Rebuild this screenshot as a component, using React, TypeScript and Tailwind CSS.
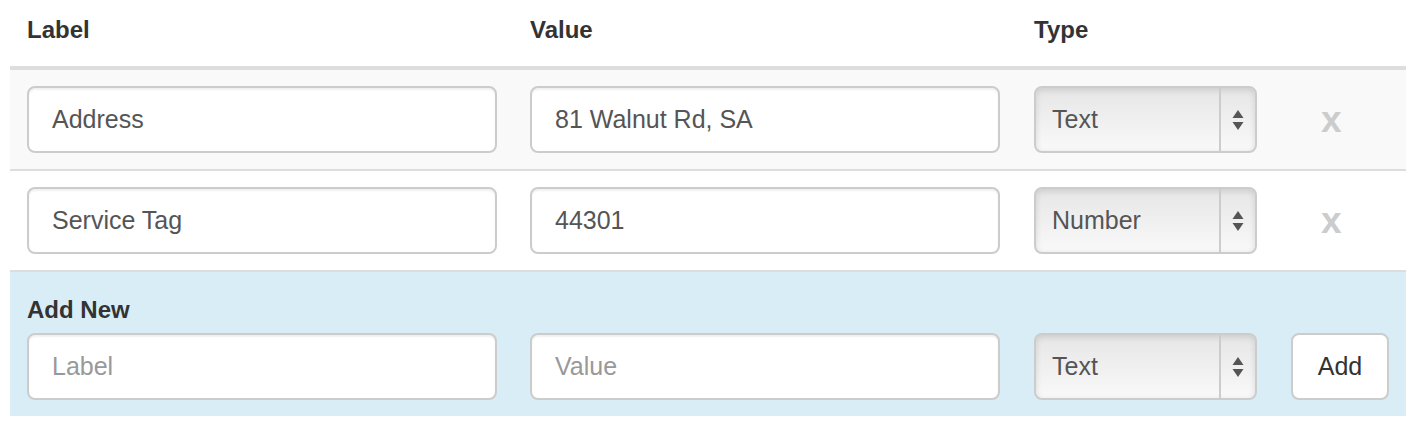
import React from 'react';

const font = { fontFamily: '"Liberation Sans", Arial, sans-serif' };

const rows = [
  { label: 'Address', value: '81 Walnut Rd, SA', type: 'Text' },
  { label: 'Service Tag', value: '44301', type: 'Number' },
];

const gridCls = 'grid grid-cols-[503px_504px_257px_98px] items-center';

const inputCls =
  'h-[67px] w-[470px] rounded-[8px] border-2 border-[#cccccc] bg-white px-[23px] text-[25px] text-[#555555] shadow-[inset_0_2px_2px_rgba(0,0,0,0.06)] outline-none placeholder:text-[#999999]';

const SelectBox: React.FC<{ value: string }> = ({ value }) => (
  <div className="flex h-[67px] w-[223px] overflow-hidden rounded-[8px] border-2 border-[#cccccc] bg-gradient-to-b from-[#e6e6e6] to-[#f9f9f9] shadow-[inset_0_2px_6px_rgba(0,0,0,0.12)]">
    <div className="flex flex-1 items-center pl-[16px] text-[25px] text-[#555555]">{value}</div>
    <div className="flex w-[36px] items-center justify-center border-l-2 border-[#cccccc]">
      <svg width="12" height="22" viewBox="0 0 12 22">
        <path d="M6 1 L11.5 9 L0.5 9 Z" fill="#555555" />
        <path d="M0.5 13 L11.5 13 L6 21 Z" fill="#555555" />
      </svg>
    </div>
  </div>
);

const App: React.FC = () => {
  return (
    <div className="min-h-[424px] bg-white pl-[10px] pr-[10px]" style={font}>
      <div className="w-[1396px]">
        {/* header */}
        <div className={`${gridCls} h-[66px] pb-[6px] pl-[17px] text-[24px] font-bold text-[#333333]`}>
          <div>Label</div>
          <div>Value</div>
          <div>Type</div>
          <div></div>
        </div>
        <div className="h-[4px] bg-[#dddddd]"></div>

        {rows.map((row, i) => (
          <div
            key={row.label}
            className={`${gridCls} border-b-2 border-[#dddddd] pb-[16px] pl-[17px] pt-[16px] ${
              i === 0 ? 'bg-[#f9f9f9]' : 'bg-white'
            }`}
          >
            <input className={inputCls} defaultValue={row.label} />
            <input className={inputCls} defaultValue={row.value} />
            <SelectBox value={row.type} />
            <div className="pl-[30px] text-[37px] font-bold leading-none text-[#cccccc]">x</div>
          </div>
        ))}

        <div className="bg-[#d9edf7] pb-[16px] pl-[17px] pt-[24px]">
          <div className="mb-[9px] text-[24px] font-bold leading-[28px] text-[#333333]">Add New</div>
          <div className={gridCls}>
            <input className={inputCls} placeholder="Label" />
            <input className={inputCls} placeholder="Value" />
            <SelectBox value="Text" />
            <button className="h-[67px] w-[98px] rounded-[8px] border-2 border-[#cccccc] bg-white text-[25px] text-[#333333]">
              Add
            </button>
          </div>
        </div>
      </div>
    </div>
  );
};

export default App;
